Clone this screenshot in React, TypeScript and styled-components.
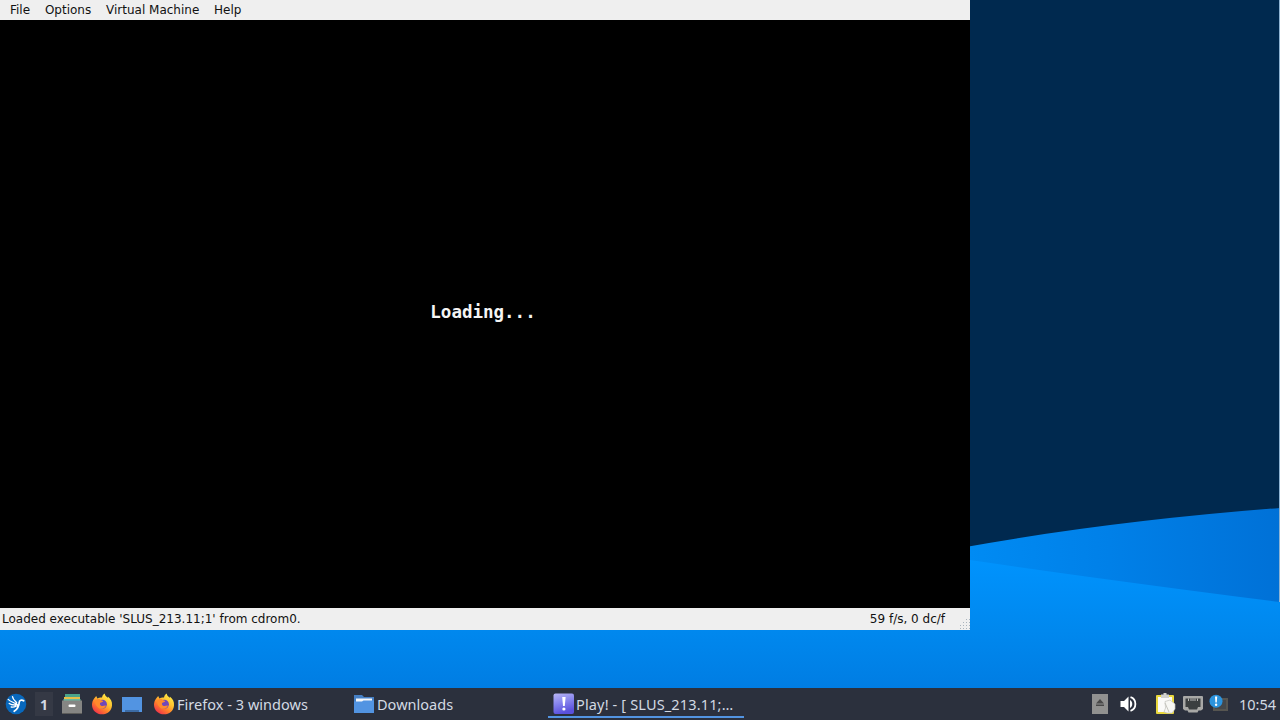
import React from "react";

import styled, { createGlobalStyle } from "styled-components";

const GlobalStyle = createGlobalStyle`
  body {
    margin: 0;
    overflow: hidden;
  }
`;

const FirefoxIcon: React.FC = () => (
  <svg width="22" height="22" viewBox="0 0 22 22">
    <defs>
      <linearGradient id="fox" x1="0.85" y1="0.05" x2="0.2" y2="0.95">
        <stop offset="0" stopColor="#fff04a" />
        <stop offset="0.38" stopColor="#ffc22f" />
        <stop offset="0.68" stopColor="#ff7a2b" />
        <stop offset="1" stopColor="#f0324c" />
      </linearGradient>
    </defs>
    <path
      fill="url(#fox)"
      d="M3.3 5.2 5.2 3l1.2 2.4C8 4.4 9.7 4.3 11 4.6c.3-2 1.3-3.4 2.7-4.1.2 2.1 1.5 3 3.1 4.2.3-.2.2-.7 0-1.2 3.2 2.4 4.5 5.2 4.2 9-.5 5.500-4.600 8.800-10 8.800S1.200 17.700 1 12c-.1-2.600.9-5 2.300-6.800Z"
    />
    <circle cx="11.4" cy="11.2" r="4.5" fill="#7148b8" />
    <path
      fill="#ff8a2c"
      d="M4.200 7c2.300-1.500 4.800-.9 6 .2l2 .8c-.4 1.100-2.100 1.300-3.100 1.900-.5 1.100.2 2.500 1.500 3 1.700.6 3-.700 4.300-.2-.6 2.500-4 3.900-6.500 2.700C5.700 14 3.400 10.500 4.200 7Z"
    />
  </svg>
);

const LubuntuIcon: React.FC = () => (
  <svg width="22" height="22" viewBox="0 0 22 22">
    <circle cx="11" cy="11" r="10.3" fill="#0868bd" />
    <path
      fill="none"
      stroke="#fff"
      strokeWidth="1.3"
      strokeLinecap="round"
      d="M3.200 6.400c2.400 2.600 5.300 2.700 8 4.600M4.200 10.500c2 1.500 4.200 1.600 6.400 1.500M7.500 3.600c.2 2.800 2.300 4.200 4.200 6M6.200 14c2 .4 3.600-.1 4.800-.900"
    />
    <path
      fill="none"
      stroke="#fff"
      strokeWidth="1.700"
      strokeLinecap="round"
      d="M18.700 7.800c-2-1.300-4.300-.6-4.500 1.500-.1 3.200-1 6.500-5 9M11 10.500c1.200.8 1.700 2 1.500 3.600"
    />
  </svg>
);

const CabinetIcon: React.FC = () => (
  <svg width="22" height="22" viewBox="0 0 22 22">
    <path fill="#4aa58b" d="M4 1h15v5H4z" />
    <path fill="#e8c04a" d="M3 4h16v3H3z" />
    <path fill="#67b8a0" d="M2.5 6h17v3h-17z" />
    <path fill="#858583" d="M1 7.5h20V21H1z" />
    <path fill="#5c5c5a" d="M1 20h20v1H1z" />
    <rect x="7.5" y="11.5" width="7" height="2.5" rx="1" fill="#fff" />
  </svg>
);

const DesktopIcon: React.FC = () => (
  <svg width="22" height="22" viewBox="0 0 22 22">
    <path fill="#5294e2" d="M1 4h20v15h-3v-2H4v2H1z" />
    <path fill="#3c6ba4" d="M4 17h14v2H4z" />
  </svg>
);

const FolderIcon: React.FC = () => (
  <svg width="22" height="22" viewBox="0 0 22 22">
    <path fill="#4680c5" d="M1 2h8l2 2h10v16H1z" />
    <path fill="#f5f7fa" d="M3 5.500h16V9H3z" />
    <path fill="#5294e2" d="M1 8.500h8l1.500-1H21V20H1z" />
  </svg>
);

const PlayIcon: React.FC = () => (
  <svg width="22" height="22" viewBox="0 0 22 22">
    <defs>
      <linearGradient id="play" x1="0" y1="0" x2="0.3" y2="1">
        <stop offset="0" stopColor="#b9b6f5" />
        <stop offset="0.5" stopColor="#8785ee" />
        <stop offset="1" stopColor="#5a50dc" />
      </linearGradient>
    </defs>
    <rect x="0.5" y="0.5" width="20.5" height="20.5" rx="2" fill="url(#play)" />
    <path fill="#fff" d="M9.2 4h3.4l-.8 9h-1.800z" />
    <circle cx="10.900" cy="16" r="1.600" fill="#fff" />
  </svg>
);

const EjectIcon: React.FC = () => (
  <svg width="16" height="20" viewBox="0 0 16 20">
    <path fill="#919190" d="M0 0h16v20H0z" />
    <path fill="#484848" d="m8 5 4 4.500H4zM4 10.500h8V12H4z" />
  </svg>
);

const VolumeIcon: React.FC = () => (
  <svg width="18" height="18" viewBox="0 0 18 18">
    <path fill="#fff" d="M.5 6h3.500L8.500 1.500v15L4 12H.5z" />
    <path fill="#fff" d="M10 5c3 1.500 3 6.500 0 8z" />
    <path fill="none" stroke="#fff" strokeWidth="1.8" d="M10.500 2.200c6.500 2 6.500 11.600 0 13.600" />
  </svg>
);

const ClipboardIcon: React.FC = () => (
  <svg width="22" height="22" viewBox="0 0 22 22">
    <rect x="1" y="2" width="18" height="19" rx="1" fill="#e9d83d" />
    <path fill="#fafaf8" d="M3 4h14v15H3z" />
    <path fill="#d1d1cc" d="M6 1.500h2.500V0h3v1.500H14V5H6z" />
    <path
      fill="#f7f7f3"
      stroke="#c2c2bb"
      strokeWidth="0.7"
      d="M10 8.500 15 7l5 4v5l-3 4h-5l-3-1 1.500-4z"
    />
    <path fill="none" stroke="#c5c5be" d="m10 10 4 9" />
  </svg>
);

const NetworkIcon: React.FC = () => (
  <svg width="20" height="20" viewBox="0 0 20 20">
    <path fill="#a8a8a6" d="M1 2h18q1 0 1 1v12l-2 1.500h-2.500l-1 2H5.500l-1-2H2L0 15V3q0-1 1-1Z" />
    <path fill="#3b3f40" d="M2.500 4.500h15V13H15l-1 2.500H6L5 13H2.500z" />
    <path stroke="#b9b9b7" d="M5.500 4.500v2.500m2.500-2.500v2.500m2-2.500v2.500m2-2.500v2.500m2.500-2.500v2.500" />
  </svg>
);

const NoticeIcon: React.FC = () => (
  <svg width="22" height="20" viewBox="0 0 22 20">
    <path fill="#565550" d="M4 4h15v13H4z" />
    <path fill="#45484a" d="M6 6h11v9H6z" />
    <circle cx="7" cy="7.200" r="6.500" fill="#2b93dd" />
    <path fill="#fff" d="M6 2.500h2.200l-.4 6H6.400z" />
    <circle cx="7.1" cy="10.700" r="1.200" fill="#fff" />
  </svg>
);

const Wallpaper: React.FC = () => (
  <Backdrop viewBox="0 0 1280 688" preserveAspectRatio="none">
    <defs>
      <linearGradient id="front" x1="0" y1="560" x2="0" y2="688" gradientUnits="userSpaceOnUse">
        <stop offset="0" stopColor="#0093fd" />
        <stop offset="0.55" stopColor="#0088ee" />
        <stop offset="1" stopColor="#007de3" />
      </linearGradient>
      <linearGradient id="back" x1="970" y1="0" x2="1280" y2="0" gradientUnits="userSpaceOnUse">
        <stop offset="0" stopColor="#008bf3" />
        <stop offset="0.45" stopColor="#0080e8" />
        <stop offset="1" stopColor="#0071d7" />
      </linearGradient>
    </defs>
    <path fill="#00294f" d="M0 0h1280v688H0z" />
    <path fill="url(#back)" d="M960 548Q1110 521 1280 508V605H960Z" />
    <path fill="url(#front)" d="M0 560H970Q1100 579 1280 602V688H0Z" />
    <path fill="#8fb4d4" d="M1279 0h1v602h-1z" />
  </Backdrop>
);

const tasks = [
  { label: "Firefox - 3 windows", icon: <FirefoxIcon /> },
  { label: "Downloads", icon: <FolderIcon /> },
  { label: "Play! - [ SLUS_213.11;…", icon: <PlayIcon />, active: true },
];

const App: React.FC = () => {
  return (
    <Screen>
      <GlobalStyle />
      <Desktop>
        <Wallpaper />
        <Window>
          <MenuBar>
            <span>File</span>
            <span>Options</span>
            <span>Virtual Machine</span>
            <span>Help</span>
          </MenuBar>
          <Viewport>
            <Loading>Loading...</Loading>
          </Viewport>
          <StatusBar>
            <span>Loaded executable 'SLUS_213.11;1' from cdrom0.</span>
            <Fps>59 f/s, 0 dc/f</Fps>
            <Grip width="10" height="10" viewBox="0 0 10 10">
              <path
                stroke="#a9b4bd"
                strokeDasharray="1 2"
                d="M6 .5h4M3 3.500h7M0 6.500h10M0 9.500h10"
              />
            </Grip>
          </StatusBar>
        </Window>
      </Desktop>
      <Panel>
        <Launchers>
          <LubuntuIcon />
          <Pager>1</Pager>
          <CabinetIcon />
          <FirefoxIcon />
          <DesktopIcon />
        </Launchers>
        <Tasks>
          {tasks.map((task) => (
            <Task key={task.label} $active={task.active}>
              {task.icon}
              <span>{task.label}</span>
            </Task>
          ))}
        </Tasks>
        <Tray>
          <TrayGroup $gap={12}>
            <EjectIcon />
            <VolumeIcon />
          </TrayGroup>
          <TrayGroup $gap={6}>
            <ClipboardIcon />
            <NetworkIcon />
            <NoticeIcon />
          </TrayGroup>
        </Tray>
        <Clock>10:54</Clock>
      </Panel>
    </Screen>
  );
};

const Screen = styled.div`
  width: 1280px;
  height: 720px;
  display: flex;
  flex-direction: column;
  overflow: hidden;
`;

const Desktop = styled.main`
  position: relative;
  height: 688px;
`;

const Backdrop = styled.svg`
  position: absolute;
  inset: 0;
  width: 100%;
  height: 100%;
`;

const Window = styled.section`
  position: relative;
  width: 970px;
  height: 630px;
  display: flex;
  flex-direction: column;
  background: #efefef;
  color: #111;
  font: 12px/20px "DejaVu Sans", sans-serif;
`;

const MenuBar = styled.nav`
  height: 20px;
  padding-left: 10px;
  display: flex;
  gap: 14.8px;
  white-space: nowrap;
`;

const Viewport = styled.div`
  height: 588px;
  background: #000;
  display: flex;
  align-items: center;
  justify-content: center;
`;

const Loading = styled.div`
  margin: 0 4px 4px 0;
  color: #f4f4f4;
  font: bold 17.5px/24px "DejaVu Sans Mono", monospace;
`;

const StatusBar = styled.footer`
  height: 22px;
  padding-left: 2px;
  display: flex;
  line-height: 22px;
  white-space: nowrap;
`;

const Fps = styled.span`
  margin-left: auto;
`;

const Grip = styled.svg`
  margin: 11px 0 0 15px;
`;

const Panel = styled.footer`
  height: 32px;
  display: flex;
  align-items: center;
  background: #2b303d;
  color: #d3dae3;
  font: 14.5px/32px "Noto Sans", sans-serif;
  white-space: nowrap;
`;

const Launchers = styled.div`
  width: 148px;
  padding-left: 5px;
  box-sizing: border-box;
  display: flex;
  align-items: center;
  gap: 8px;
`;

const Pager = styled.div`
  width: 18px;
  height: 24px;
  background: #353945;
  font-weight: bold;
  font-size: 14px;
  line-height: 25px;
  text-align: center;
`;

const Tasks = styled.div`
  display: flex;
`;

const Task = styled.div<{ $active?: boolean }>`
  width: 200px;
  height: 32px;
  padding-left: 5px;
  box-sizing: border-box;
  display: flex;
  align-items: center;
  gap: ${(p) => (p.$active ? 1 : 2)}px;
  line-height: ${(p) => (p.$active ? 30 : 32)}px;
  letter-spacing: ${(p) => (p.$active ? 0.15 : 0.03)}px;
  background: ${(p) =>
    p.$active ? "linear-gradient(#5294e2, #5294e2) 0 28px / 196px 2px no-repeat" : "none"};
`;

const Tray = styled.div`
  margin-left: auto;
  display: flex;
  align-items: center;
  gap: 17px;
`;

const TrayGroup = styled.div<{ $gap: number }>`
  display: flex;
  align-items: center;
  gap: ${(p) => p.$gap}px;
`;

const Clock = styled.time`
  margin: 0 4px 0 8px;
`;

export default App;
